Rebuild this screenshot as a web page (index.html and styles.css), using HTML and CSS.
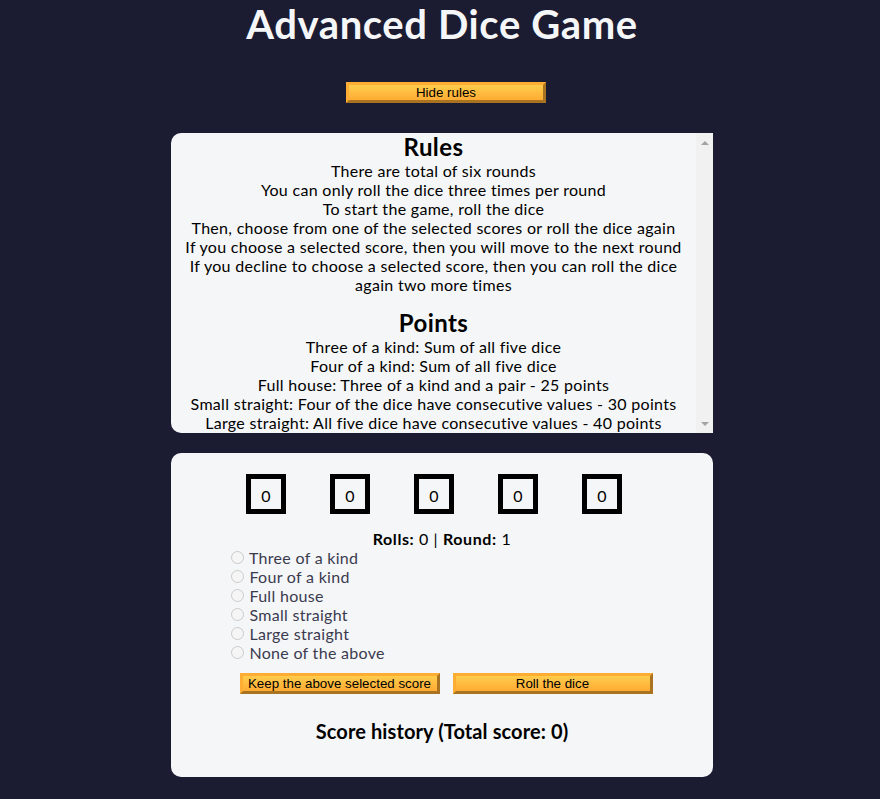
FILE: index.html
```html
<!DOCTYPE html>
<html lang="en">
<head>
<meta charset="utf-8">
<title>Advanced Dice Game</title>
<link rel="stylesheet" href="styles.css">
</head>
<body>
<header class="header">
  <h1 class="title">Advanced Dice Game</h1>
  <button class="btn rules-btn" type="button">Hide rules</button>
  <div class="rules-container">
    <div class="rules-content">
      <h2 class="rules-heading">Rules</h2>
      <ul class="rules-list">
        <li>There are total of six rounds</li>
        <li>You can only roll the dice three times per round</li>
        <li>To start the game, roll the dice</li>
        <li>Then, choose from one of the selected scores or roll the dice again</li>
        <li>If you choose a selected score, then you will move to the next round</li>
        <li>If you decline to choose a selected score, then you can roll the dice again two more times</li>
      </ul>
      <h2 class="rules-heading points">Points</h2>
      <ul class="rules-list">
        <li>Three of a kind: Sum of all five dice</li>
        <li>Four of a kind: Sum of all five dice</li>
        <li>Full house: Three of a kind and a pair - 25 points</li>
        <li>Small straight: Four of the dice have consecutive values - 30 points</li>
        <li>Large straight: All five dice have consecutive values - 40 points</li>
      </ul>
    </div>
    <div class="scrollbar">
      <span class="arrow arrow-up"></span>
      <span class="arrow arrow-down"></span>
    </div>
  </div>
</header>
<main class="game">
  <div class="dice">
    <div class="die">0</div>
    <div class="die">0</div>
    <div class="die">0</div>
    <div class="die">0</div>
    <div class="die">0</div>
  </div>
  <p class="rounds-text"><strong>Rolls:</strong> 0 | <strong>Round:</strong> 1</p>
  <div class="score-options">
    <div class="option"><input type="radio" name="score" id="o1" disabled> <label for="o1">Three of a kind</label></div>
    <div class="option"><input type="radio" name="score" id="o2" disabled> <label for="o2">Four of a kind</label></div>
    <div class="option"><input type="radio" name="score" id="o3" disabled> <label for="o3">Full house</label></div>
    <div class="option"><input type="radio" name="score" id="o4" disabled> <label for="o4">Small straight</label></div>
    <div class="option"><input type="radio" name="score" id="o5" disabled> <label for="o5">Large straight</label></div>
    <div class="option"><input type="radio" name="score" id="o6" disabled> <label for="o6">None of the above</label></div>
  </div>
  <div class="actions">
    <button class="btn" type="button">Keep the above selected score</button>
    <button class="btn" type="button">Roll the dice</button>
  </div>
  <h3 class="score-title">Score history (Total score: 0)</h3>
</main>
</body>
</html>
```

FILE: styles.css
```css
* {
  box-sizing: border-box;
}

html, body {
  margin: 0;
  padding: 0;
}

body {
  background-color: #1b1b32;
  padding-left: 4px;
  font-family: "Lato", "DejaVu Sans", sans-serif;
  font-size: 16px;
  letter-spacing: 0.3px;
  color: #000;
}

.header {
  display: flex;
  flex-direction: column;
  align-items: center;
}

.title {
  margin: 0;
  font-size: 40px;
  line-height: 48px;
  font-weight: bold;
  letter-spacing: 0.6px;
  color: #f5f6f7;
}

.btn {
  width: 200px;
  height: 21px;
  padding: 0;
  font-family: "Liberation Sans", Arial, sans-serif;
  font-size: 13.333px;
  letter-spacing: 0;
  color: #000;
  background-color: #feac32;
  background-image: linear-gradient(#fecc4c, #ffac33);
  border-style: outset;
  border-color: #feac32;
  border-width: 3px;
  cursor: pointer;
}

.rules-btn {
  margin: 34px 0 0 8px;
}

.rules-container {
  display: flex;
  width: 542px;
  height: 300px;
  margin-top: 30px;
  background-color: #f5f6f7;
  border-radius: 10px 0 0 10px;
  overflow: hidden;
}

.rules-content {
  flex: 1;
  padding: 0 10px;
  text-align: center;
  overflow: hidden;
}

.rules-heading {
  margin: 0;
  font-size: 24px;
  line-height: 28px;
  font-weight: bold;
  letter-spacing: 0.4px;
}

.points {
  margin-top: 15px;
}

.rules-list {
  list-style: none;
  margin: 0;
  padding: 0;
  line-height: 19px;
}

.scrollbar {
  width: 17px;
  background-color: #f1f1f1;
  display: flex;
  flex-direction: column;
  justify-content: space-between;
  align-items: center;
  padding: 8px 0 7px;
}

.arrow {
  width: 0;
  height: 0;
  border-left: 4px solid transparent;
  border-right: 4px solid transparent;
}

.arrow-up {
  border-bottom: 4px solid #a3a3a3;
}

.arrow-down {
  border-top: 4px solid #a3a3a3;
}

.game {
  width: 542px;
  margin: 20px auto 0;
  background-color: #f5f6f7;
  border-radius: 10px;
  padding: 21px 0 34px;
}

.dice {
  display: flex;
  gap: 44px;
  padding-left: 75px;
}

.die {
  width: 40px;
  height: 40px;
  border: 5px solid #000;
  text-align: center;
  padding-top: 7px;
  line-height: 19px;
  letter-spacing: 0;
}

.rounds-text {
  margin: 15px 0 0;
  line-height: 19px;
  text-align: center;
  letter-spacing: 0.6px;
}

.score-options {
  padding-left: 55px;
}

.option {
  height: 19px;
  line-height: 19px;
  color: #3b3b4f;
}

.option input {
  margin: 0 1px 0 5px;
  width: 13px;
  height: 13px;
  vertical-align: baseline;
}

.actions {
  display: flex;
  justify-content: center;
  gap: 13px;
  margin-top: 11px;
}

.actions .btn:first-child {
  margin-left: 8px;
}

.score-title {
  margin: 26px 0 0;
  font-size: 20px;
  line-height: 23px;
  letter-spacing: 0.1px;
  text-align: center;
}
```
